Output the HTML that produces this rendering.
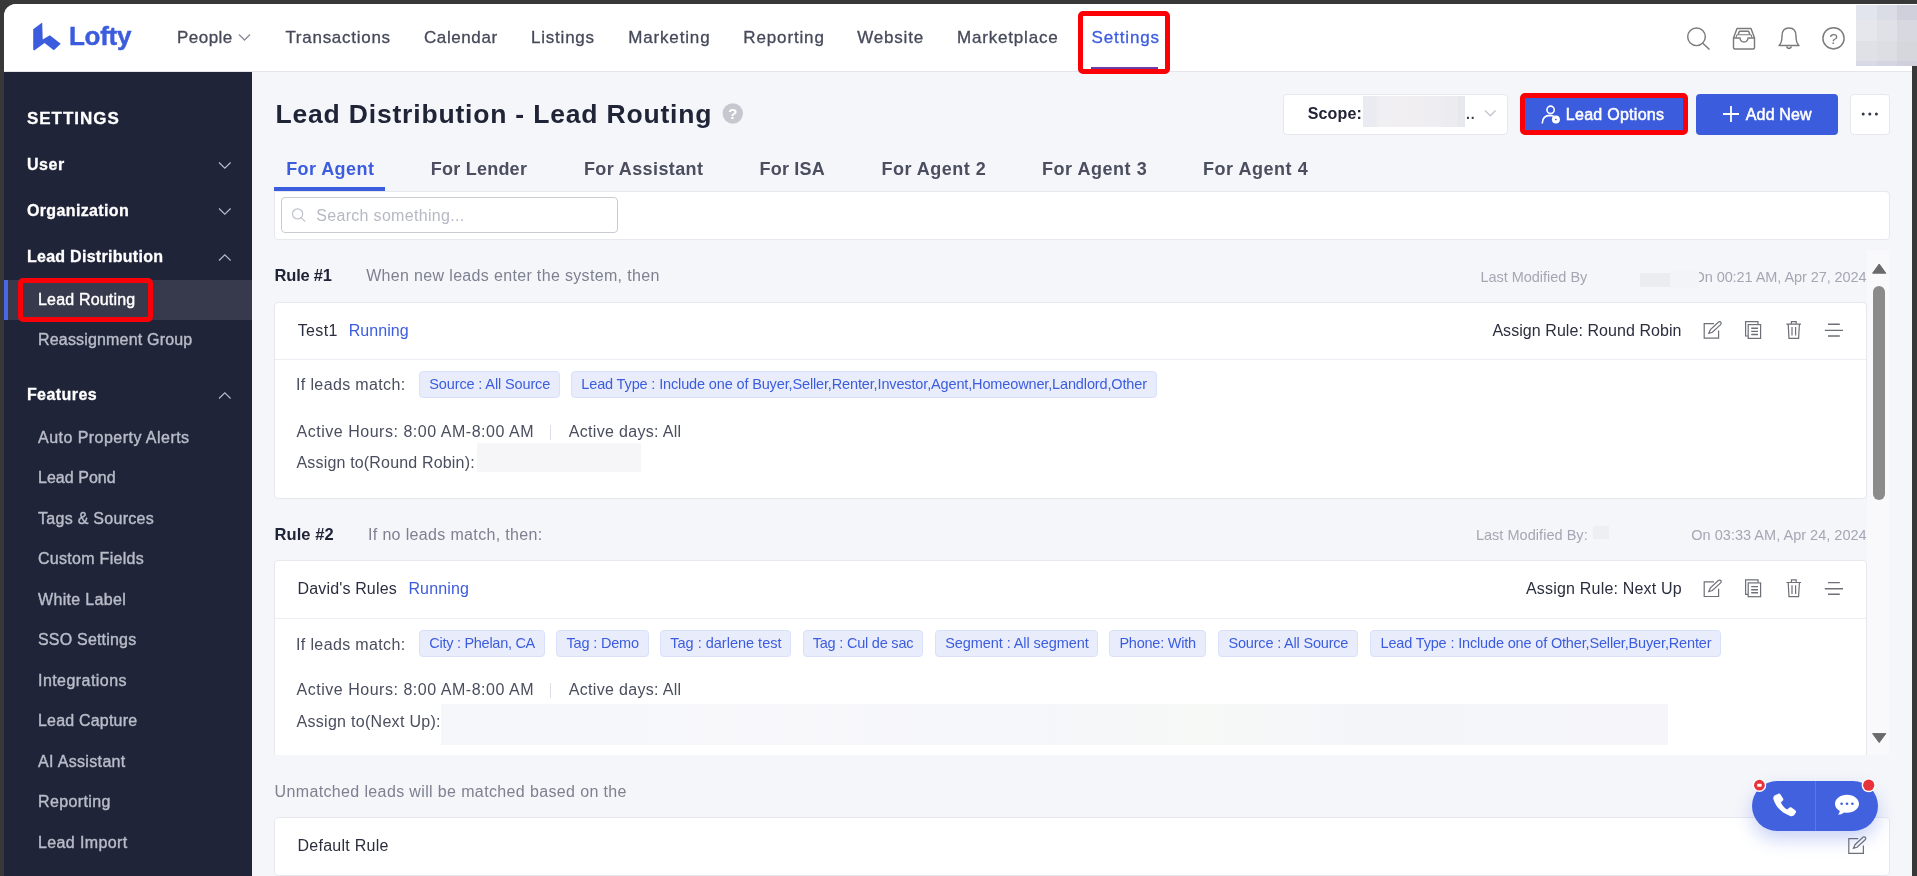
<!DOCTYPE html>
<html lang="en">
<head>
<meta charset="utf-8">
<title>Lead Distribution - Lead Routing</title>
<style>
*{box-sizing:border-box;margin:0;padding:0}
html,body{width:1917px;height:876px;overflow:hidden;background:#383838;font-family:"Liberation Sans",sans-serif}
.abs,.t,svg.i{position:absolute}
.t{white-space:nowrap;line-height:20px;display:block}
#app{position:absolute;left:4px;top:4px;width:1913px;height:872px;background:#f5f6fa;border-top-left-radius:12px;overflow:hidden}
#wrap{position:absolute;left:-4px;top:-4px;width:1917px;height:876px}
header{position:absolute;left:0;top:0;width:1917px;height:71px;background:#fff}
#hline{left:0;top:71px;width:1917px;height:1px;background:#e4e6ec}
aside{position:absolute;left:0;top:72px;width:252px;height:804px;background:#202438}
.redbox{position:absolute;border:5px solid #fb0007;border-radius:5px;z-index:5}
.card{position:absolute;background:#fff;border:1px solid #e6e8ee;border-radius:4px}
.tag{position:absolute;height:26px;background:#e9edfb;border:1px solid #d9e0f9;border-radius:4px}
.btn{position:absolute;background:#3c5cde;border-radius:4px}
svg.i{overflow:visible}
</style>
</head>
<body>
<div id="app"><div id="wrap">

<header>
  <svg class="i" style="left:0;top:0" width="140" height="71"><polygon fill="#3c5cde" points="33.2,29.2 42.2,22.4 42.7,39.5 49.8,35.2 60.7,43.8 53.9,50.2 44.5,43 34.2,50.4 33.2,49.5"/></svg>
  <!-- People chevron -->
  <svg class="i" style="left:238px;top:32.5px" width="13" height="9"><polyline points="1,1.5 6.5,7 12,1.5" fill="none" stroke="#8a8d99" stroke-width="1.4"/></svg>
  <!-- settings underline -->
  <div class="abs" style="left:1091px;top:67px;width:67px;height:4px;background:#6a3fa8"></div>
  <!-- header icons -->
  <svg class="i" style="left:1684px;top:24px" width="30" height="30" fill="none" stroke="#7b7b7b" stroke-width="1.45"><circle cx="12.5" cy="12.8" r="8.8"/><line x1="18.8" y1="19.2" x2="25.5" y2="25.5"/></svg>
  <svg class="i" style="left:1731px;top:26px" width="26" height="26" fill="none" stroke="#7b7b7b" stroke-width="1.45" stroke-linejoin="round"><path d="M2.5 12 L6 2.5 H20 L23.5 12 V21.5 Q23.5 23 22 23 H4 Q2.5 23 2.5 21.5 Z"/><path d="M2.5 12 H9 Q9.5 16 13 16 Q16.5 16 17 12 H23.5"/><path d="M7.2 8.6 L8.4 5.2 H17.6 L18.8 8.6"/><path d="M5 11.6 L5.9 8.8 H20.1 L21 11.6" stroke-width="1.1"/></svg>
  <svg class="i" style="left:1776px;top:25px" width="26" height="28" fill="none" stroke="#7b7b7b" stroke-width="1.45" stroke-linejoin="round"><path d="M3 20.5 Q6 18 6 11 Q6 3 13 3 Q20 3 20 11 Q20 18 23 20.5 Z"/><path d="M10.5 21.5 Q13 25.5 15.5 21.5"/></svg>
  <svg class="i" style="left:1821px;top:26px;will-change:transform" width="26" height="26"><circle cx="12.5" cy="12.3" r="10.6" fill="none" stroke="#7b7b7b" stroke-width="1.45"/><text x="12.5" y="18" text-anchor="middle" font-family="Liberation Sans, sans-serif" font-size="15.5" fill="#777">?</text></svg>
  <!-- blurred avatar mosaic -->
  <div class="abs" style="left:1856px;top:5px;width:61px;height:61px;background:#dfe0e6">
    <div class="abs" style="left:0;top:0;width:21px;height:15px;background:#e2e5ee"></div><div class="abs" style="left:21px;top:0;width:20px;height:15px;background:#dadde6"></div><div class="abs" style="left:41px;top:0;width:20px;height:15px;background:#cfd0db"></div>
    <div class="abs" style="left:0;top:15px;width:21px;height:21px;background:#e6e7ec"></div><div class="abs" style="left:21px;top:15px;width:20px;height:21px;background:#e0e1e7"></div><div class="abs" style="left:41px;top:15px;width:20px;height:21px;background:#d8d9e0"></div>
    <div class="abs" style="left:0;top:36px;width:21px;height:20px;background:#e0e1e7"></div><div class="abs" style="left:21px;top:36px;width:20px;height:20px;background:#dddee4"></div><div class="abs" style="left:41px;top:36px;width:20px;height:20px;background:#d6d7dd"></div>
    <div class="abs" style="left:0;top:56px;width:21px;height:5px;background:#d8dbe6"></div><div class="abs" style="left:21px;top:56px;width:20px;height:5px;background:#d3d5e0"></div><div class="abs" style="left:41px;top:56px;width:20px;height:5px;background:#cfd0db"></div>
  </div>
  <div class="redbox" style="left:1078px;top:11px;width:92px;height:63px"></div>
</header>
<div class="abs" id="hline"></div>

<aside>
  <div class="abs" style="left:4px;top:208px;width:248px;height:40px;background:#373a4c"></div>
  <div class="abs" style="left:4px;top:208px;width:4px;height:40px;background:#4a66e4"></div>
  <div class="redbox" style="left:18px;top:206px;width:135px;height:44px"></div>
  <svg class="i" style="left:218px;top:89px" width="14" height="9"><polyline points="1,1.5 6.8,7.2 12.6,1.5" fill="none" stroke="#b9bcc8" stroke-width="1.15"/></svg>
  <svg class="i" style="left:218px;top:135px" width="14" height="9"><polyline points="1,1.5 6.8,7.2 12.6,1.5" fill="none" stroke="#b9bcc8" stroke-width="1.15"/></svg>
  <svg class="i" style="left:218px;top:181px" width="14" height="9"><polyline points="1,7.5 6.8,1.8 12.6,7.5" fill="none" stroke="#b9bcc8" stroke-width="1.15"/></svg>
  <svg class="i" style="left:218px;top:319px" width="14" height="9"><polyline points="1,7.5 6.8,1.8 12.6,7.5" fill="none" stroke="#b9bcc8" stroke-width="1.15"/></svg>
</aside>

<main>
  <!-- help circle next to title -->
  <svg class="i" style="left:722px;top:103px;will-change:transform" width="22" height="22"><circle cx="10.8" cy="10.5" r="10.2" fill="#c6c8d0"/><text x="10.8" y="16" text-anchor="middle" font-family="Liberation Sans, sans-serif" font-weight="700" font-size="15.5" fill="#fff">?</text></svg>

  <!-- scope select -->
  <div class="card" style="left:1283px;top:94px;width:225px;height:41px"></div>
  <div class="abs" style="left:1363px;top:96px;width:102px;height:31px;background:linear-gradient(90deg,#e9ebf2 0,#eaebf1 12%,#f0eff1 16%,#f0eef0 55%,#eeedf1 74%,#ebebf0 92%,#e7e8ee 94%)"></div>
  <svg class="i" style="left:1484px;top:109px" width="13" height="9"><polyline points="1,1.5 6.3,6.8 11.6,1.5" fill="none" stroke="#c3c6cf" stroke-width="1.4"/></svg>

  <!-- lead options -->
  <div class="btn" style="left:1522px;top:96px;width:164px;height:37px"></div>
  <div class="redbox" style="left:1519.6px;top:93.2px;width:168.2px;height:41.6px;border-width:5px"></div>
  <svg class="i" style="left:1540px;top:104px" width="22" height="22" fill="none" stroke="#fff" stroke-width="1.6"><circle cx="10.6" cy="5.8" r="3.65"/><path d="M2.3 19 Q2.6 11.6 10 11.4 Q12 11.4 13.2 12.2" stroke-linecap="round"/><circle cx="15.9" cy="15.5" r="4" fill="#fff" stroke="none"/><circle cx="15.9" cy="15.5" r="0.85" fill="#3c5cde" stroke="none"/></svg>
  <!-- add new -->
  <div class="btn" style="left:1696px;top:94px;width:142px;height:40.5px"></div>
  <svg class="i" style="left:1723px;top:106px" width="16" height="16" stroke="#fff" stroke-width="1.8"><line x1="0" y1="8" x2="16" y2="8"/><line x1="8" y1="0" x2="8" y2="16"/></svg>
  <!-- more -->
  <div class="card" style="left:1850px;top:94px;width:40px;height:41px"></div>
  <svg class="i" style="left:1861px;top:112px" width="18" height="4" fill="#333849"><circle cx="2.2" cy="2" r="1.5"/><circle cx="8.8" cy="2" r="1.5"/><circle cx="15.4" cy="2" r="1.5"/></svg>

  <!-- tabs underline + search panel -->
  <div class="abs" style="left:274px;top:187px;width:111px;height:4px;background:#3c5cde"></div>
  <div class="card" style="left:274px;top:191px;width:1616px;height:49px;border-radius:0 4px 4px 4px"></div>
  <div class="abs" style="left:281px;top:197px;width:337px;height:36px;border:1px solid #c9cbd3;border-radius:4px;background:#fff"></div>
  <svg class="i" style="left:291px;top:207px" width="16" height="16" fill="none" stroke="#bfc2cb" stroke-width="1.2"><circle cx="6.6" cy="6.9" r="5.1"/><line x1="10.2" y1="10.6" x2="14.2" y2="14.6"/></svg>

  <!-- scroll region -->
  <div class="abs" id="scroll" style="left:274px;top:250px;width:1617px;height:505px;overflow:hidden">
    <div class="abs" style="left:1593px;top:0;width:22px;height:505px;background:#f9f9fb"></div>
    <svg class="i" style="left:1597px;top:12px" width="16" height="12"><polygon points="1.6,11.2 14.8,11.2 8.2,2" fill="#6a6a6a" stroke="#6a6a6a" stroke-width="1" stroke-linejoin="round"/></svg>
    <svg class="i" style="left:1597px;top:482px" width="16" height="12"><polygon points="1.6,1.6 14.8,1.6 8.2,10.6" fill="#6a6a6a" stroke="#6a6a6a" stroke-width="1" stroke-linejoin="round"/></svg>
    <div class="abs" style="left:1598.5px;top:36px;width:12.5px;height:214px;border-radius:7px;background:#8b8b8b"></div>
  </div>

  <!-- rule 1 -->
  <div class="abs" style="left:1640px;top:272.5px;width:30px;height:14.5px;background:#ebecf0"></div>
  <div class="abs" style="left:1670px;top:270px;width:29px;height:18px;background:#f3f4f8;z-index:3"></div>
  <div class="card" style="left:274px;top:302px;width:1593px;height:197px"></div>
  <div class="abs" style="left:275px;top:359px;width:1591px;height:1px;background:#eceef3"></div>
  <div class="tag" style="left:419px;top:371px;width:141px;height:27px"></div>
  <div class="tag" style="left:571px;top:371px;width:586px;height:27px"></div>
  <div class="abs" style="left:550px;top:425px;width:1px;height:15px;background:#dcdee5"></div>
  <div class="abs" style="left:476.5px;top:443px;width:164px;height:28.5px;background:#f6f6f9"></div>
  
  <svg class="i" style="left:0;top:0" width="1917" height="876" fill="none" stroke="#6e7078" stroke-width="1.2">
    <path d="M1714 323.6 H1704.2 V338.2 H1718.6 V330.5"/>
    <path d="M1708.8 333.3 L1710.4 329.6 L1718.6 322.0 Q1720 321.2 1721 322.6 Q1721.6 323.8 1720.6 324.6 L1712.4 332.2 Z"/>
    <path d="M1748 336.0 H1745.6 V321.6 H1758 V324.4"/>
    <rect x="1748.2" y="324.6" width="12.4" height="13.8"/>
    <path d="M1751.2 328.3 H1758 M1751.2 331.4 H1758 M1751.2 334.5 H1758" stroke-width="1.4"/>
    <path d="M1786.4 324.2 H1801 M1791.4 324.0 V321.6 H1796.2 V324.0 M1788.2 324.4 L1789 338.3 H1798.6 L1799.4 324.4 M1792 327.0 V335.6 M1795.6 327.0 V335.6"/>
    <path d="M1828 324.3 H1839.8 M1824.8 330.4 H1843 M1828 336.0 H1839.8" stroke-width="1.4"/>
  </svg>

  <!-- rule 2 -->
  <div class="abs" style="left:1592.5px;top:525.5px;width:16.5px;height:13px;background:#eeeff3"></div>
  <div class="card" style="left:274px;top:560px;width:1593px;height:250px;clip-path:inset(0 0 55px 0)"></div>
  <div class="abs" style="left:275px;top:618px;width:1591px;height:1px;background:#eceef3"></div>
    <div class="tag" style="left:419.1px;top:630px;height:26.5px;width:125.7px"></div>
  <div class="tag" style="left:556.3px;top:630px;height:26.5px;width:92.3px"></div>
  <div class="tag" style="left:660.1px;top:630px;height:26.5px;width:130.9px"></div>
  <div class="tag" style="left:802.5px;top:630px;height:26.5px;width:120.5px"></div>
  <div class="tag" style="left:935.0px;top:630px;height:26.5px;width:163.3px"></div>
  <div class="tag" style="left:1109.2px;top:630px;height:26.5px;width:96.5px"></div>
  <div class="tag" style="left:1218.3px;top:630px;height:26.5px;width:139.6px"></div>
  <div class="tag" style="left:1370.3px;top:630px;height:26.5px;width:350.7px"></div>
  <div class="abs" style="left:550px;top:683px;width:1px;height:15px;background:#dcdee5"></div>
  <div class="abs" style="left:441px;top:704px;width:1227px;height:40.5px;background:linear-gradient(90deg,#f6f7fa 0%,#f8f8fb 30%,#f5f6f9 50%,#f7f9f7 62%,#f4f5f9 75%,#f6f6fa 100%)"></div>
  
  <svg class="i" style="left:0;top:0" width="1917" height="876" fill="none" stroke="#6e7078" stroke-width="1.2">
    <path d="M1714 581.9 H1704.2 V596.5 H1718.6 V588.8"/>
    <path d="M1708.8 591.6 L1710.4 587.9 L1718.6 580.3 Q1720 579.5 1721 580.9 Q1721.6 582.1 1720.6 582.9 L1712.4 590.5 Z"/>
    <path d="M1748 594.3 H1745.6 V579.9 H1758 V582.7"/>
    <rect x="1748.2" y="582.9" width="12.4" height="13.8"/>
    <path d="M1751.2 586.6 H1758 M1751.2 589.7 H1758 M1751.2 592.8 H1758" stroke-width="1.4"/>
    <path d="M1786.4 582.5 H1801 M1791.4 582.3 V579.9 H1796.2 V582.3 M1788.2 582.7 L1789 596.6 H1798.6 L1799.4 582.7 M1792 585.3 V593.9 M1795.6 585.3 V593.9"/>
    <path d="M1828 582.6 H1839.8 M1824.8 588.7 H1843 M1828 594.3 H1839.8" stroke-width="1.4"/>
  </svg>

  <!-- default rule -->
  <div class="card" style="left:274px;top:817px;width:1616px;height:59px"></div>
  
  <svg class="i" style="left:1847.6px;top:835.6px" width="20" height="20" fill="none" stroke="#6e7078" stroke-width="1.2">
    <path d="M10.2 2.6 H0.8 V17.4 H15.4 V9.5"/>
    <path d="M5.4 12.4 L7 8.7 L15.2 1.1 Q16.6 0.3 17.6 1.7 Q18.2 2.9 17.2 3.700 L9 11.3 Z"/>
  </svg>

  <!-- floating pill -->
  <div class="abs" style="left:1752px;top:781px;width:126px;height:49.5px;border-radius:25px;background:#4161df;box-shadow:0 8px 18px rgba(60,92,222,.28)"></div>
  <div class="abs" style="left:1815px;top:781px;width:1px;height:49.5px;background:#5a77e6"></div>
  <svg class="i" style="left:1770px;top:791.5px" width="29" height="29" viewBox="0 0 24 24"><path fill="#fff" d="M6.6 1.6c.7-.5 1.6-.3 2.1.4l2.100 3.300c.4.7.3 1.500-.3 2l-1.500 1.300c1.100 2.400 3 4.500 5.300 5.900l1.500-1.400c.5-.5 1.400-.6 2-.2l3.100 2.200c.7.500.9 1.400.4 2.100l-1.100 1.600c-.8 1.100-2.200 1.500-3.500 1C9.400 17.200 4.400 11.600 2.800 5.800c-.3-1.200.2-2.500 1.300-3.100z"/></svg>
  <svg class="i" style="left:1834px;top:794px" width="26" height="23" viewBox="0 0 26 23"><path fill="#fff" d="M13 .8C6.200.8 1 4.800 1 9.800c0 3 1.900 5.600 4.800 7.200-.2 1.400-.9 2.700-1.900 3.700 2.300-.1 4.400-.9 6-2.300 1 .2 2 .3 3.100.3 6.800 0 12-4 12-8.900S19.800.8 13 .8z"/><circle cx="7.600" cy="9.800" r="1.300" fill="#4161df"/><circle cx="13" cy="9.800" r="1.300" fill="#4161df"/><circle cx="18.400" cy="9.800" r="1.300" fill="#4161df"/></svg>
  <svg class="i" style="left:1751px;top:777px" width="16" height="16"><circle cx="8.400" cy="8.200" r="6.800" fill="#fff"/><circle cx="8.400" cy="8.200" r="5.400" fill="#e8333a"/><rect x="6.200" y="6.700" width="4.400" height="3" rx=".6" fill="#fff"/></svg>
  <svg class="i" style="left:1860px;top:777px" width="16" height="16"><circle cx="8.700" cy="8.200" r="7" fill="#fff"/><circle cx="8.700" cy="8.200" r="5.600" fill="#e8333a"/></svg>
</main>

<!-- right dark border -->
<div class="abs" style="left:1912px;top:66px;width:5px;height:810px;background:#383838"></div>

<div id="txt" style="position:absolute;left:0;top:0;width:1917px;height:876px;will-change:transform">
<span class="t" id="t0" style="left:68.90px;top:26px;font-size:26px;font-weight:700;color:#3c5cde;letter-spacing:-0.237px;-webkit-text-stroke:.45px currentColor;">Lofty</span>
<span class="t" id="t1" style="left:177.00px;top:28px;font-size:17px;font-weight:400;color:#454959;letter-spacing:0.472px;-webkit-text-stroke:.3px currentColor;">People</span>
<span class="t" id="t2" style="left:285.40px;top:28px;font-size:17px;font-weight:400;color:#454959;letter-spacing:0.728px;-webkit-text-stroke:.3px currentColor;">Transactions</span>
<span class="t" id="t3" style="left:424.00px;top:28px;font-size:17px;font-weight:400;color:#454959;letter-spacing:0.586px;-webkit-text-stroke:.3px currentColor;">Calendar</span>
<span class="t" id="t4" style="left:531.00px;top:28px;font-size:17px;font-weight:400;color:#454959;letter-spacing:0.780px;-webkit-text-stroke:.3px currentColor;">Listings</span>
<span class="t" id="t5" style="left:628.20px;top:28px;font-size:17px;font-weight:400;color:#454959;letter-spacing:0.845px;-webkit-text-stroke:.3px currentColor;">Marketing</span>
<span class="t" id="t6" style="left:743.30px;top:28px;font-size:17px;font-weight:400;color:#454959;letter-spacing:0.860px;-webkit-text-stroke:.3px currentColor;">Reporting</span>
<span class="t" id="t7" style="left:857.30px;top:28px;font-size:17px;font-weight:400;color:#454959;letter-spacing:0.782px;-webkit-text-stroke:.3px currentColor;">Website</span>
<span class="t" id="t8" style="left:957.10px;top:28px;font-size:17px;font-weight:400;color:#454959;letter-spacing:0.799px;-webkit-text-stroke:.3px currentColor;">Marketplace</span>
<span class="t" id="t9" style="left:1091.50px;top:28px;font-size:17px;font-weight:400;color:#3c5cde;letter-spacing:0.880px;-webkit-text-stroke:.3px currentColor;">Settings</span>
<span class="t" id="t10" style="left:26.90px;top:109px;font-size:17px;font-weight:700;color:#fff;letter-spacing:0.983px;-webkit-text-stroke:.3px currentColor;">SETTINGS</span>
<span class="t" id="t11" style="left:26.90px;top:155px;font-size:16px;font-weight:700;color:#fff;letter-spacing:0.607px;-webkit-text-stroke:.3px currentColor;">User</span>
<span class="t" id="t12" style="left:26.90px;top:201px;font-size:16px;font-weight:700;color:#fff;letter-spacing:0.374px;-webkit-text-stroke:.3px currentColor;">Organization</span>
<span class="t" id="t13" style="left:26.90px;top:247px;font-size:16px;font-weight:700;color:#fff;letter-spacing:0.284px;-webkit-text-stroke:.3px currentColor;">Lead Distribution</span>
<span class="t" id="t14" style="left:38.00px;top:290px;font-size:16px;font-weight:400;color:#fff;letter-spacing:0.174px;-webkit-text-stroke:.4px currentColor;">Lead Routing</span>
<span class="t" id="t15" style="left:38.00px;top:330px;font-size:16px;font-weight:400;color:#b9bcc8;letter-spacing:0.177px;-webkit-text-stroke:.4px currentColor;">Reassignment Group</span>
<span class="t" id="t16" style="left:26.90px;top:385px;font-size:16px;font-weight:700;color:#fff;letter-spacing:0.442px;-webkit-text-stroke:.3px currentColor;">Features</span>
<span class="t" id="t17" style="left:38.00px;top:428px;font-size:16px;font-weight:400;color:#b9bcc8;letter-spacing:0.463px;-webkit-text-stroke:.4px currentColor;">Auto Property Alerts</span>
<span class="t" id="t18" style="left:38.00px;top:468px;font-size:16px;font-weight:400;color:#b9bcc8;letter-spacing:0.037px;-webkit-text-stroke:.4px currentColor;">Lead Pond</span>
<span class="t" id="t19" style="left:38.00px;top:509px;font-size:16px;font-weight:400;color:#b9bcc8;letter-spacing:0.280px;-webkit-text-stroke:.4px currentColor;">Tags &amp; Sources</span>
<span class="t" id="t20" style="left:38.00px;top:549px;font-size:16px;font-weight:400;color:#b9bcc8;letter-spacing:0.288px;-webkit-text-stroke:.4px currentColor;">Custom Fields</span>
<span class="t" id="t21" style="left:38.00px;top:590px;font-size:16px;font-weight:400;color:#b9bcc8;letter-spacing:0.320px;-webkit-text-stroke:.4px currentColor;">White Label</span>
<span class="t" id="t22" style="left:38.00px;top:630px;font-size:16px;font-weight:400;color:#b9bcc8;letter-spacing:0.196px;-webkit-text-stroke:.4px currentColor;">SSO Settings</span>
<span class="t" id="t23" style="left:38.00px;top:671px;font-size:16px;font-weight:400;color:#b9bcc8;letter-spacing:0.445px;-webkit-text-stroke:.4px currentColor;">Integrations</span>
<span class="t" id="t24" style="left:38.00px;top:711px;font-size:16px;font-weight:400;color:#b9bcc8;letter-spacing:0.194px;-webkit-text-stroke:.4px currentColor;">Lead Capture</span>
<span class="t" id="t25" style="left:38.00px;top:752px;font-size:16px;font-weight:400;color:#b9bcc8;letter-spacing:0.337px;-webkit-text-stroke:.4px currentColor;">AI Assistant</span>
<span class="t" id="t26" style="left:38.00px;top:792px;font-size:16px;font-weight:400;color:#b9bcc8;letter-spacing:0.391px;-webkit-text-stroke:.4px currentColor;">Reporting</span>
<span class="t" id="t27" style="left:38.00px;top:833px;font-size:16px;font-weight:400;color:#b9bcc8;letter-spacing:0.381px;-webkit-text-stroke:.4px currentColor;">Lead Import</span>
<span class="t" id="t28" style="left:275.50px;top:104px;font-size:26.5px;font-weight:700;color:#202437;letter-spacing:0.812px;">Lead Distribution - Lead Routing</span>
<span class="t" id="t29" style="left:286.20px;top:159px;font-size:18px;font-weight:700;color:#3c5cde;letter-spacing:0.421px;">For Agent</span>
<span class="t" id="t30" style="left:430.70px;top:159px;font-size:18px;font-weight:700;color:#4a4e5e;letter-spacing:0.243px;">For Lender</span>
<span class="t" id="t31" style="left:583.90px;top:159px;font-size:18px;font-weight:700;color:#4a4e5e;letter-spacing:0.395px;">For Assistant</span>
<span class="t" id="t32" style="left:759.50px;top:159px;font-size:18px;font-weight:700;color:#4a4e5e;letter-spacing:0.197px;">For ISA</span>
<span class="t" id="t33" style="left:881.50px;top:159px;font-size:18px;font-weight:700;color:#4a4e5e;letter-spacing:0.486px;">For Agent 2</span>
<span class="t" id="t34" style="left:1042.00px;top:159px;font-size:18px;font-weight:700;color:#4a4e5e;letter-spacing:0.536px;">For Agent 3</span>
<span class="t" id="t35" style="left:1203.00px;top:159px;font-size:18px;font-weight:700;color:#4a4e5e;letter-spacing:0.536px;">For Agent 4</span>
<span class="t" id="t36" style="left:316.30px;top:206px;font-size:16px;font-weight:400;color:#b6b9c3;letter-spacing:0.306px;">Search something...</span>
<span class="t" id="t37" style="left:1307.70px;top:104px;font-size:16px;font-weight:700;color:#202437;letter-spacing:0.171px;">Scope:</span>
<span class="t" id="t38" style="left:1466.00px;top:104px;font-size:14px;font-weight:700;color:#3a3d4b;letter-spacing:0.919px;">..</span>
<span class="t" id="t39" style="left:1565.80px;top:105px;font-size:16px;font-weight:400;color:#fff;letter-spacing:0.274px;-webkit-text-stroke:.5px currentColor;">Lead Options</span>
<span class="t" id="t40" style="left:1745.80px;top:105px;font-size:16px;font-weight:400;color:#fff;letter-spacing:0.146px;-webkit-text-stroke:.5px currentColor;">Add New</span>
<span class="t" id="t41" style="left:274.60px;top:265px;font-size:16.5px;font-weight:700;color:#202437;letter-spacing:-0.217px;">Rule #1</span>
<span class="t" id="t42" style="left:366.20px;top:266px;font-size:16px;font-weight:400;color:#7d8190;letter-spacing:0.335px;">When new leads enter the system, then</span>
<span class="t" id="t43" style="left:1480.40px;top:267px;font-size:14.5px;font-weight:400;color:#a4a7b3;letter-spacing:-0.020px;">Last Modified By</span>
<span class="t" id="t44" style="left:1693.50px;top:267px;font-size:14.5px;font-weight:400;color:#a4a7b3;letter-spacing:-0.077px;">On 00:21 AM, Apr 27, 2024</span>
<span class="t" id="t45" style="left:297.80px;top:321px;font-size:16px;font-weight:400;color:#2b2e3e;letter-spacing:0.313px;">Test1</span>
<span class="t" id="t46" style="left:348.70px;top:321px;font-size:16px;font-weight:400;color:#3c5cde;letter-spacing:0.048px;">Running</span>
<span class="t" id="t47" style="left:1492.40px;top:321px;font-size:16px;font-weight:400;color:#2b2e3e;letter-spacing:0.062px;">Assign Rule: Round Robin</span>
<span class="t" id="t48" style="left:296.00px;top:375px;font-size:16px;font-weight:400;color:#4a4e5e;letter-spacing:0.368px;">If leads match:</span>
<span class="t" id="t49" style="left:429.30px;top:374px;font-size:14.5px;font-weight:400;color:#3c5cde;letter-spacing:-0.129px;">Source : All Source</span>
<span class="t" id="t50" style="left:581.30px;top:374px;font-size:14.5px;font-weight:400;color:#3c5cde;letter-spacing:-0.141px;">Lead Type : Include one of Buyer,Seller,Renter,Investor,Agent,Homeowner,Landlord,Other</span>
<span class="t" id="t51" style="left:296.50px;top:422px;font-size:16px;font-weight:400;color:#4a4e5e;letter-spacing:0.524px;">Active Hours: 8:00 AM-8:00 AM</span>
<span class="t" id="t52" style="left:568.80px;top:422px;font-size:16px;font-weight:400;color:#4a4e5e;letter-spacing:0.313px;">Active days: All</span>
<span class="t" id="t53" style="left:296.50px;top:453px;font-size:16px;font-weight:400;color:#4a4e5e;letter-spacing:0.172px;">Assign to(Round Robin):</span>
<span class="t" id="t54" style="left:274.60px;top:524px;font-size:16.5px;font-weight:700;color:#202437;letter-spacing:0.066px;">Rule #2</span>
<span class="t" id="t55" style="left:368.00px;top:525px;font-size:16px;font-weight:400;color:#7d8190;letter-spacing:0.347px;">If no leads match, then:</span>
<span class="t" id="t56" style="left:1475.90px;top:525px;font-size:14.5px;font-weight:400;color:#a4a7b3;letter-spacing:0.035px;">Last Modified By:</span>
<span class="t" id="t57" style="left:1691.30px;top:525px;font-size:14.5px;font-weight:400;color:#a4a7b3;letter-spacing:0.019px;">On 03:33 AM, Apr 24, 2024</span>
<span class="t" id="t58" style="left:297.50px;top:579px;font-size:16px;font-weight:400;color:#2b2e3e;letter-spacing:0.157px;">David&#x27;s Rules</span>
<span class="t" id="t59" style="left:408.40px;top:579px;font-size:16px;font-weight:400;color:#3c5cde;letter-spacing:0.148px;">Running</span>
<span class="t" id="t60" style="left:1526.00px;top:579px;font-size:16px;font-weight:400;color:#2b2e3e;letter-spacing:0.191px;">Assign Rule: Next Up</span>
<span class="t" id="t61" style="left:296.00px;top:635px;font-size:16px;font-weight:400;color:#4a4e5e;letter-spacing:0.368px;">If leads match:</span>
<span class="t" id="t62" style="left:429.30px;top:633px;font-size:14.5px;font-weight:400;color:#3c5cde;letter-spacing:-0.276px;">City : Phelan, CA</span>
<span class="t" id="t63" style="left:566.50px;top:633px;font-size:14.5px;font-weight:400;color:#3c5cde;letter-spacing:-0.173px;">Tag : Demo</span>
<span class="t" id="t64" style="left:670.30px;top:633px;font-size:14.5px;font-weight:400;color:#3c5cde;letter-spacing:-0.003px;">Tag : darlene test</span>
<span class="t" id="t65" style="left:812.70px;top:633px;font-size:14.5px;font-weight:400;color:#3c5cde;letter-spacing:-0.212px;">Tag : Cul de sac</span>
<span class="t" id="t66" style="left:945.20px;top:633px;font-size:14.5px;font-weight:400;color:#3c5cde;letter-spacing:-0.074px;">Segment : All segment</span>
<span class="t" id="t67" style="left:1119.40px;top:633px;font-size:14.5px;font-weight:400;color:#3c5cde;letter-spacing:-0.220px;">Phone: With</span>
<span class="t" id="t68" style="left:1228.50px;top:633px;font-size:14.5px;font-weight:400;color:#3c5cde;letter-spacing:-0.190px;">Source : All Source</span>
<span class="t" id="t69" style="left:1380.50px;top:633px;font-size:14.5px;font-weight:400;color:#3c5cde;letter-spacing:-0.159px;">Lead Type : Include one of Other,Seller,Buyer,Renter</span>
<span class="t" id="t70" style="left:296.50px;top:680px;font-size:16px;font-weight:400;color:#4a4e5e;letter-spacing:0.524px;">Active Hours: 8:00 AM-8:00 AM</span>
<span class="t" id="t71" style="left:568.80px;top:680px;font-size:16px;font-weight:400;color:#4a4e5e;letter-spacing:0.313px;">Active days: All</span>
<span class="t" id="t72" style="left:296.50px;top:712px;font-size:16px;font-weight:400;color:#4a4e5e;letter-spacing:0.293px;">Assign to(Next Up):</span>
<span class="t" id="t73" style="left:274.50px;top:782px;font-size:16px;font-weight:400;color:#7d8190;letter-spacing:0.367px;">Unmatched leads will be matched based on the</span>
<span class="t" id="t74" style="left:297.50px;top:836px;font-size:16px;font-weight:400;color:#2b2e3e;letter-spacing:0.259px;">Default Rule</span>
</div>
</div></div>
</body>
</html>
